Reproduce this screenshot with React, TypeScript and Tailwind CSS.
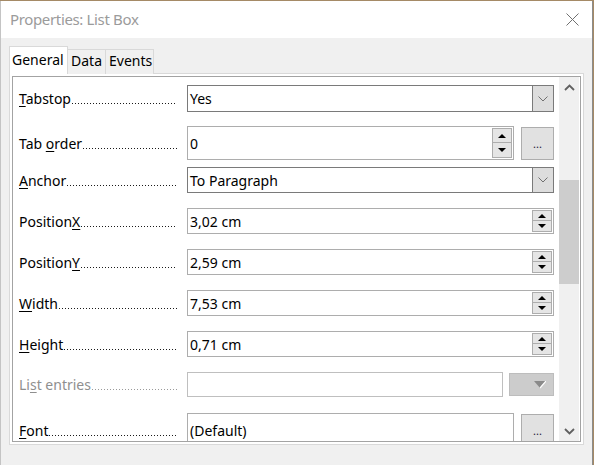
import React from "react";

function Label({ pre = "", u, post = "", disabled = false }: { pre?: string; u: string; post?: string; disabled?: boolean }) {
  return (
    <div className={`w-[158px] flex items-baseline whitespace-nowrap text-[14px] ${disabled ? "text-[#8f8f8f]" : "text-black"}`}>
      <span>
        {pre}
        <span className="underline underline-offset-2 decoration-1">{u}</span>
        {post}
      </span>
      <span
        className={`flex-1 min-w-0 ml-[1px] h-[1px] self-end mb-[5px] bg-repeat-x bg-[length:3px_1px] ${
          disabled
            ? "bg-[linear-gradient(to_right,#9a9a9a_1px,transparent_1px)]"
            : "bg-[linear-gradient(to_right,#1a1a1a_1px,transparent_1px)]"
        }`}
      />
    </div>
  );
}

function Spin({ h }: { h: "sm" | "lg" }) {
  const bh = h === "lg" ? "h-[15px]" : "h-[11px]";
  return (
    <div className="flex flex-col w-[20px]">
      <div className={`${bh} bg-[#e5e5e5] border border-[#adadad] flex items-center justify-center`}>
        <div className="w-0 h-0 border-l-[4px] border-r-[4px] border-b-[4px] border-l-transparent border-r-transparent border-b-black" />
      </div>
      <div className={`${bh} bg-[#e5e5e5] border border-t-0 border-[#adadad] flex items-center justify-center`}>
        <div className="w-0 h-0 border-l-[4px] border-r-[4px] border-t-[4px] border-l-transparent border-r-transparent border-t-black" />
      </div>
    </div>
  );
}

function Chevron() {
  return (
    <svg width="10" height="6" viewBox="0 0 10 6">
      <path d="M0.5 0.5 L5 5 L9.5 0.5" fill="none" stroke="#707070" strokeWidth="1" />
    </svg>
  );
}

function Select({ value }: { value: string }) {
  return (
    <div className="w-[367px] h-full border border-[#7a7a7a] bg-white flex items-center">
      <span className="flex-1 pl-[2px] text-[14px] text-black">{value}</span>
      <div className="w-[21px] h-full border-l border-[#7a7a7a] bg-[#dddddd] flex items-center justify-center">
        <Chevron />
      </div>
    </div>
  );
}

function SpinField({ value }: { value: string }) {
  return (
    <div className="w-[367px] h-full border border-[#adadad] bg-white flex items-center pr-[1px]">
      <span className="flex-1 pl-[2px] text-[14px] text-black">{value}</span>
      <Spin h="sm" />
    </div>
  );
}

function DotsButton() {
  return (
    <div className="w-[33px] h-[33px] bg-[#e1e1e1] border border-[#adadad] flex items-end justify-center pb-[11px]">
      <span className="text-[11px] leading-[8px] text-[#1a1a3a] tracking-[0px]">...</span>
    </div>
  );
}

export default function App() {
  return (
    <div className="w-[594px] h-[465px] overflow-hidden bg-[#a58a66]" style={{ fontFamily: "'Noto Sans', 'Open Sans', sans-serif" }}>
      <div className="w-[593px] h-[465px] mt-[1px] bg-[#f0f0f0] border-l border-[#c4c4c4] border-r border-r-[#8c8c8c] border-b border-b-[#8c8c8c] flex flex-col">
        {/* title bar */}
        <div className="h-[37px] bg-white flex items-center shrink-0">
          <span className="ml-[9px] text-[15px] tracking-[-0.35px] text-[#9b9b9b]">Properties: List Box</span>
          <div className="flex-1" />
          <svg className="mr-[13px]" width="13" height="13" viewBox="0 0 13 13">
            <path d="M0.5 0.5 L12.5 12.5 M12.5 0.5 L0.5 12.5" stroke="#707070" strokeWidth="1" />
          </svg>
        </div>

        {/* tabs */}
        <div className="mt-[8px] ml-[8px] h-[28px] flex items-end relative z-10">
          <div className="w-[59px] h-[28px] bg-white border border-b-0 border-[#d9d9d9] pl-[2px] pt-[4px] text-[14px] text-black leading-[18px]">General</div>
          <div className="w-[38px] h-[25px] bg-[#f0f0f0] border border-l-0 border-b-0 border-[#d9d9d9] pl-[3px] pt-[2px] text-[14px] text-black leading-[18px]">Data</div>
          <div className="w-[48px] h-[25px] bg-[#f0f0f0] border border-l-0 border-b-0 border-[#d9d9d9] pl-[3px] pt-[2px] text-[14px] text-black leading-[18px]">Events</div>
        </div>

        {/* panel */}
        <div className="ml-[8px] -mt-[1px] w-[575px] h-[372px] border border-[#d9d9d9] bg-white p-[2px]">
          <div className="w-full h-full border border-[#a3a3a3] flex overflow-hidden">
            <div className="flex-1 flex flex-col pl-[6px] overflow-hidden">
              <div className="mt-[8px] h-[27px] shrink-0 flex items-center gap-[10px]">
                <Label u="T" post="abstop" />
                <Select value="Yes" />
              </div>
              <div className="mt-[14px] h-[34px] shrink-0 flex items-center gap-[10px]">
                <Label pre="Tab " u="o" post="rder" />
                <div className="flex items-center gap-[7px]">
                  <div className="w-[327px] h-[34px] border border-[#adadad] bg-white flex items-center pr-[1px]">
                    <span className="flex-1 pl-[2px] text-[14px] text-black">0</span>
                    <Spin h="lg" />
                  </div>
                  <DotsButton />
                </div>
              </div>
              <div className="mt-[7px] h-[26px] shrink-0 flex items-center gap-[10px]">
                <Label u="A" post="nchor" />
                <Select value="To Paragraph" />
              </div>
              <div className="mt-[15px] h-[26px] shrink-0 flex items-center gap-[10px]">
                <Label pre="Position" u="X" />
                <SpinField value="3,02 cm" />
              </div>
              <div className="mt-[15px] h-[26px] shrink-0 flex items-center gap-[10px]">
                <Label pre="Position" u="Y" />
                <SpinField value="2,59 cm" />
              </div>
              <div className="mt-[15px] h-[26px] shrink-0 flex items-center gap-[10px]">
                <Label u="W" post="idth" />
                <SpinField value="7,53 cm" />
              </div>
              <div className="mt-[15px] h-[26px] shrink-0 flex items-center gap-[10px]">
                <Label u="H" post="eight" />
                <SpinField value="0,71 cm" />
              </div>
              <div className="mt-[15px] h-[25px] shrink-0 flex items-center gap-[10px]">
                <Label pre="Li" u="s" post="t entries" disabled />
                <div className="flex items-center gap-[6px]">
                  <div className="w-[316px] h-[25px] border border-[#bfbfbf] bg-white" />
                  <div className="w-[45px] h-[23px] bg-[#cccccc] border border-[#bdbdbd] flex items-center justify-end pr-[7px]">
                    <svg width="12" height="8" viewBox="0 0 12 8">
                      <path d="M0 0 H12 L6 7 Z" fill="#8a8a8a" />
                      <path d="M12 0 L6 7" stroke="#ffffff" strokeWidth="1.2" />
                    </svg>
                  </div>
                </div>
              </div>
              <div className="mt-[16px] h-[30px] shrink-0 flex items-start gap-[10px]">
                <div className="h-[34px] flex items-center">
                  <Label u="F" post="ont" />
                </div>
                <div className="flex items-start gap-[7px]">
                  <div className="w-[327px] h-[34px] border border-[#adadad] bg-white flex items-center">
                    <span className="pl-[2px] text-[14px] text-black">(Default)</span>
                  </div>
                  <div className="mt-[1px]">
                    <DotsButton />
                  </div>
                </div>
              </div>
            </div>
            {/* scrollbar */}
            <div className="w-[20px] mr-[1px] bg-[#f0f0f0] flex flex-col shrink-0">
              <div className="h-[20px] flex items-center justify-center">
                <svg width="11" height="7" viewBox="0 0 11 7">
                  <path d="M1 6 L5.5 1.5 L10 6" fill="none" stroke="#606060" strokeWidth="1.8" />
                </svg>
              </div>
              <div className="mt-[83px] h-[104px] bg-[#cdcdcd]" />
              <div className="flex-1" />
              <div className="h-[20px] flex items-center justify-center">
                <svg width="11" height="7" viewBox="0 0 11 7">
                  <path d="M1 1 L5.5 5.5 L10 1" fill="none" stroke="#606060" strokeWidth="1.8" />
                </svg>
              </div>
            </div>
          </div>
        </div>
      </div>
    </div>
  );
}
